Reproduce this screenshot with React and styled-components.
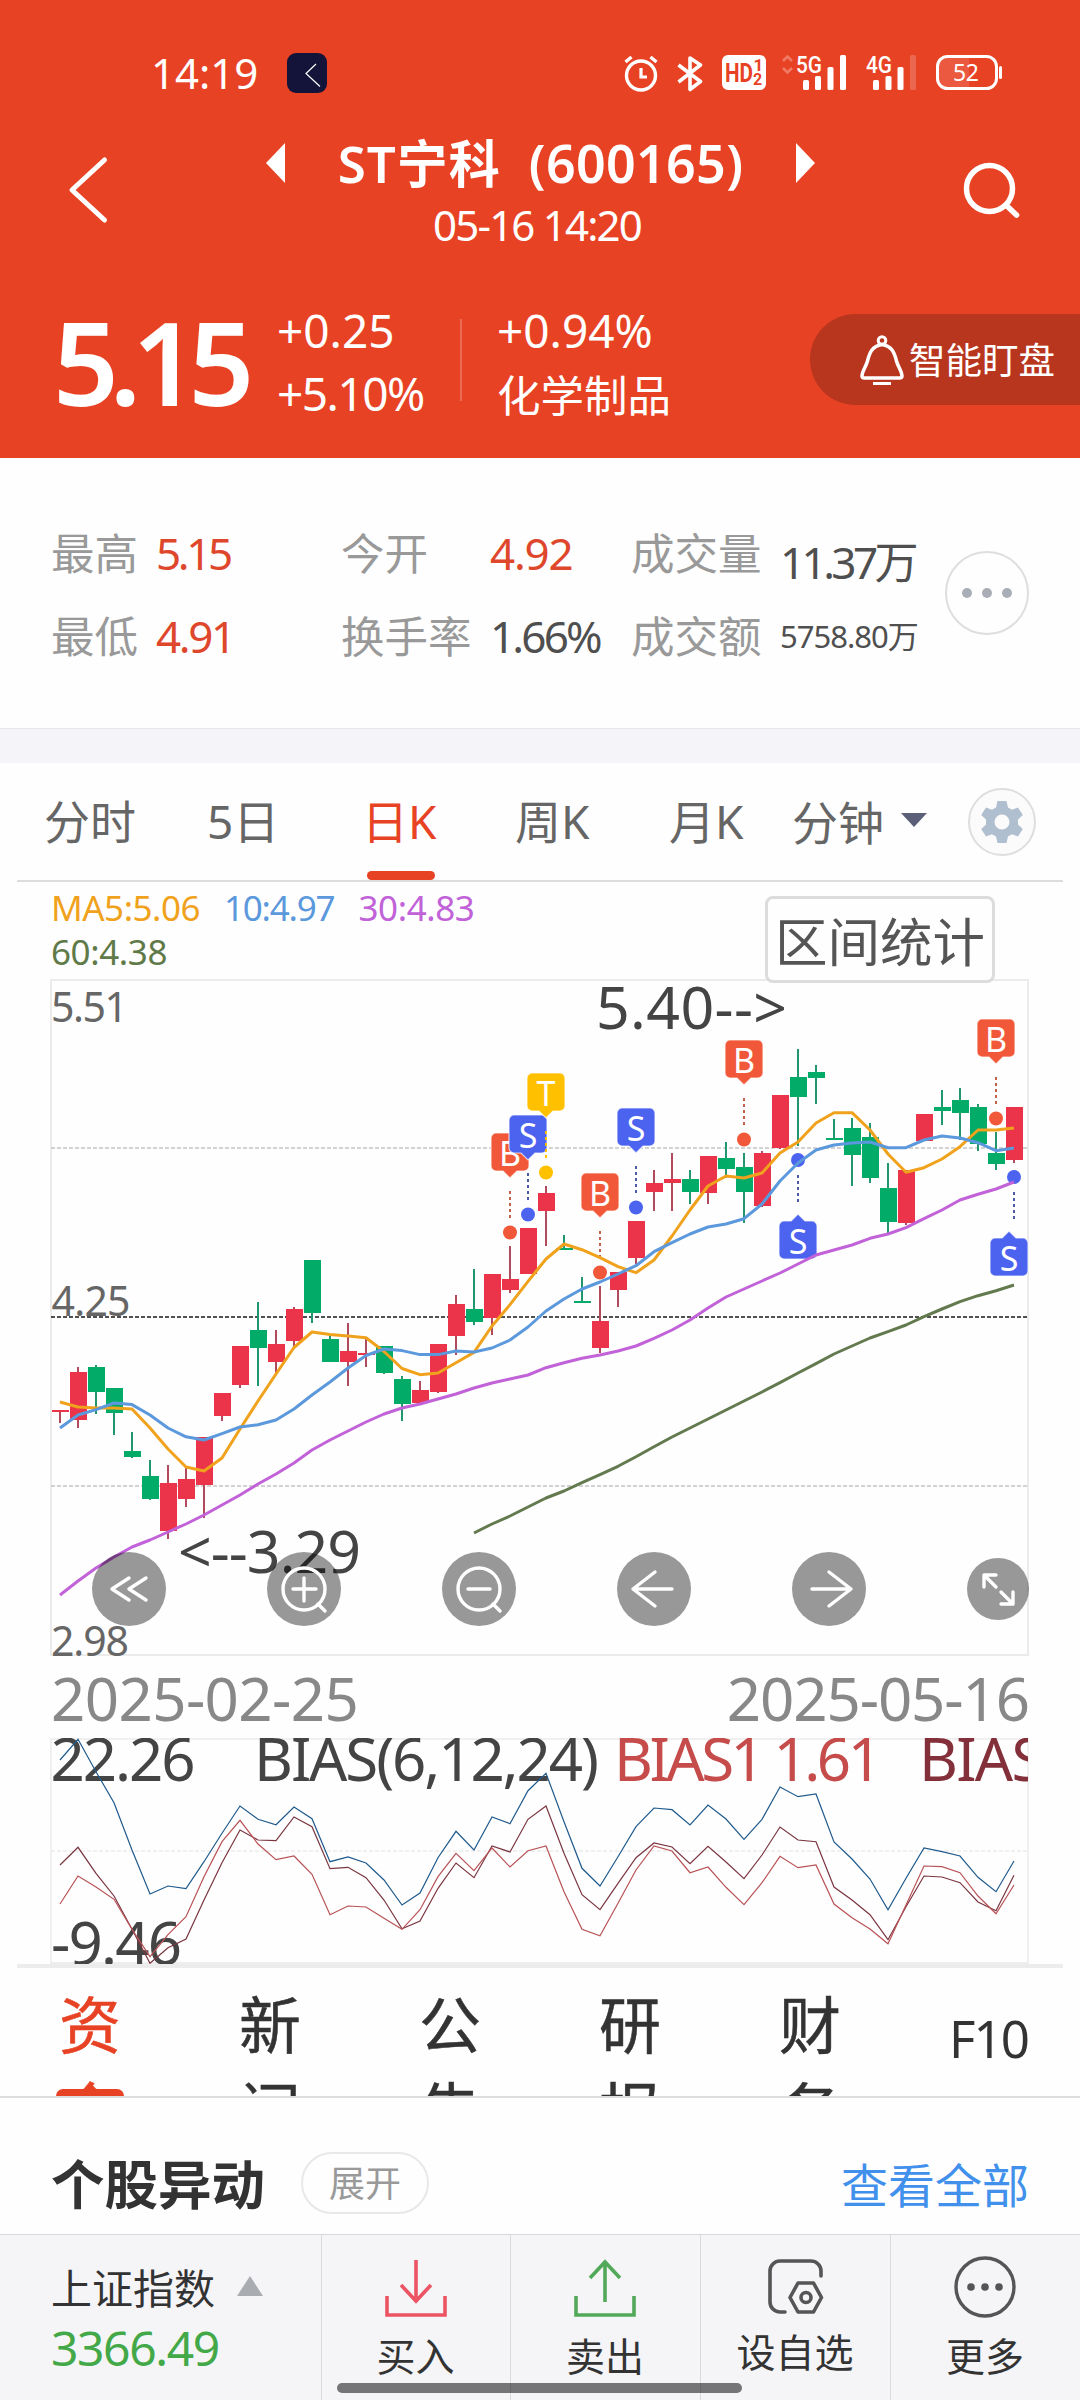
import React from "react";
import styled, { createGlobalStyle } from "styled-components";

const FONT = '"Noto Sans", "Noto Sans CJK SC", sans-serif';

const GlobalStyle = createGlobalStyle`
  * { box-sizing: border-box; }
  body { margin: 0; background: #fff; font-family: ${FONT}; color: #333; }
  svg { display: block; flex: none; }
`;

const Screen = styled.main`
  position: relative;
  width: 1080px;
  height: 2400px;
  overflow: hidden;
  display: flex;
  flex-direction: column;
  background: #fefefe;
`;

const Label = styled.span`
  display: block;
  white-space: pre;
  font-size: ${(p) => p.$size}px;
  line-height: ${(p) => p.$line || Math.round(p.$size * 1.2)}px;
  color: ${(p) => p.$color || "inherit"};
  font-weight: ${(p) => p.$weight || 400};
  letter-spacing: ${(p) => p.$track || 0}px;
`;

/* ---------- header ---------- */

const Header = styled.header`
  height: 458px;
  flex: none;
  background: #e84224;
  color: #fff;
`;

const StatusBar = styled.div`
  height: 110px;
  padding: 36px 77px 0 151px;
  display: flex;
  align-items: center;
`;

const AppBadge = styled.div`
  width: 40px;
  height: 40px;
  margin-left: 29px;
  border-radius: 9px;
  background: #14143a;
`;

const StatusIcons = styled.div`
  margin-left: auto;
  height: 37px;
`;

const NavBar = styled.div`
  height: 160px;
  display: grid;
  grid-template-columns: 260px 560px 260px;
`;

const BackButton = styled.div`
  padding: 46px 0 0 66px;
`;

const SearchButton = styled.div`
  padding: 49px 0 0 142px;
`;

const TitleBlock = styled.div`
  padding-top: 24px;
  display: flex;
  flex-direction: column;
  align-items: center;
`;

const TitleRow = styled.div`
  width: 100%;
  height: 57px;
  padding: 0 5px 0 6px;
  display: flex;
  align-items: center;
  justify-content: space-between;
`;

const StockTitle = styled.div`
  display: flex;
  align-items: center;
  gap: ${(p) => p.$gap || 0}px;
`;

const Timestamp = styled(Label)`
  padding-right: 6px;
`;

const QuoteRow = styled.div`
  height: 188px;
  padding-left: 51px;
  display: flex;
  align-items: flex-start;
`;

const Price = styled.div`
  width: 226px;
  height: 188px;
  padding: 22px 0 0 2px;
`;

const ChangeColumn = styled.div`
  width: ${(p) => p.$width}px;
  padding-top: 29px;
  display: flex;
  flex-direction: column;
`;

const HeaderRule = styled.div`
  width: 2px;
  height: 82px;
  margin: 49px 35px 0 0;
  background: rgba(255, 255, 255, 0.22);
`;

const WatchPill = styled.div`
  margin: 44px 0 0 auto;
  width: 270px;
  height: 91px;
  padding-left: 50px;
  border-radius: 46px 0 0 46px;
  background: #b8351e;
  display: flex;
  align-items: center;
  gap: 5px;
`;

/* ---------- stats ---------- */

const Stats = styled.section`
  height: 270px;
  flex: none;
  padding: 54px 0 0 51px;
  display: flex;
`;

const StatGrid = styled.div`
  width: 894px;
  display: grid;
  grid-template-columns: 105px 185px 149px 141px 149px 165px;
  grid-auto-rows: 83px;
`;

const StatValue = styled(Label)`
  padding-top: ${(p) => p.$drop || 0}px;
`;

const MoreButton = styled.div`
  width: 84px;
  height: 84px;
  margin-top: 39px;
  border: 2px solid #dedede;
  border-radius: 50%;
  display: flex;
  align-items: center;
  justify-content: center;
  gap: 10px;
`;

const Dot = styled.i`
  width: 10px;
  height: 10px;
  border-radius: 50%;
  background: #a9adb5;
`;

const Band = styled.div`
  height: 35px;
  flex: none;
  border-top: 1px solid #e8e8ec;
  background: #f4f4f9;
`;

/* ---------- period tabs ---------- */

const PeriodTabs = styled.nav`
  height: 119px;
  flex: none;
  margin: 0 17px;
  padding-left: 27px;
  border-bottom: 2px solid #dcdcdc;
  display: flex;
`;

const PeriodTab = styled.div`
  width: ${(p) => p.$width}px;
  padding-top: 9px;
  display: flex;
  flex-direction: column;
  align-items: flex-start;
`;

const TabBar = styled.i`
  width: 68px;
  height: 10px;
  margin-left: 5px;
  border-radius: 5px;
  background: #e84224;
`;

const MinuteTab = styled.div`
  width: 176px;
  height: 118px;
  display: flex;
  align-items: center;
  gap: 17px;
`;

const Caret = styled.i`
  width: 0;
  height: 0;
  margin-top: -5px;
  border-left: 13.5px solid transparent;
  border-right: 13.5px solid transparent;
  ${(p) => (p.$up ? "border-bottom: 20px solid #a9adb2;" : "border-top: 14px solid #5b5f78;")}
`;

const GearButton = styled.div`
  width: 68px;
  height: 68px;
  margin-top: 25px;
  border: 2px solid #dedede;
  border-radius: 50%;
  background: #fbfbfb;
`;

/* ---------- chart ---------- */

const LegendRow = styled.div`
  height: 97px;
  flex: none;
  padding: 4px 85px 0 51px;
  display: flex;
  justify-content: space-between;
  align-items: flex-start;
`;

const Legend = styled.div`
  width: 440px;
  display: flex;
  flex-wrap: wrap;
  column-gap: 24px;
`;

const RangeButton = styled.div`
  position: relative;
  z-index: 2;
  width: 230px;
  height: 87px;
  margin-top: 10px;
  padding-top: 3px;
  border: 3px solid #dcdcdc;
  border-radius: 8px;
  background: #fefefe;
  display: flex;
  align-items: center;
  justify-content: center;
`;

const ChartArea = styled.section`
  position: relative;
  height: 677px;
  flex: none;
  margin-left: 50px;
`;

const Controls = styled.div`
  position: absolute;
  left: 42px;
  top: 573px;
  height: 74px;
  display: flex;
  align-items: center;
  gap: 101px;
`;

const ControlButton = styled.div`
  width: ${(p) => p.$size}px;
  height: ${(p) => p.$size}px;
  border-radius: 50%;
  background: rgba(0, 0, 0, 0.4);
`;

const DateRow = styled.div`
  height: 82px;
  flex: none;
  padding: 7px 51px 0 51px;
  display: flex;
  justify-content: space-between;
`;

const BiasArea = styled.section`
  height: 226px;
  flex: none;
  margin-left: 50px;
`;

/* ---------- info tabs ---------- */

const InfoTabs = styled.nav`
  position: relative;
  height: 134px;
  flex: none;
  overflow: hidden;
  border-bottom: 2px solid #dcdcdc;
`;

const InfoRule = styled.div`
  height: 4px;
  margin: 0 17px;
  background: #ececec;
`;

const InfoRow = styled.div`
  padding: 14px 0 0 59px;
  display: flex;
`;

const InfoTab = styled.div`
  width: 62px;
  margin-right: 118px;
  font-size: 62px;
  line-height: 86px;
  word-break: break-all;
  -webkit-text-stroke: 0.5px currentColor;
  color: ${(p) => (p.$active ? "#e84224" : "#333")};
`;

const ProfileTab = styled(Label)`
  margin-left: -10px;
`;

const InfoBar = styled.i`
  position: absolute;
  left: 56px;
  top: 125px;
  width: 68px;
  height: 14px;
  border-radius: 7px;
  background: #e84224;
`;

const AlertRow = styled.section`
  height: 136px;
  flex: none;
  padding: 34px 51px 0 51px;
  display: flex;
  align-items: center;
`;

const AlertText = styled(Label)`
  padding-top: 3px;
`;

const ExpandPill = styled.div`
  width: 128px;
  height: 62px;
  margin: 0 auto 0 36px;
  border: 2px solid #e8e8e8;
  border-radius: 31px;
  display: flex;
  align-items: center;
  justify-content: center;
`;

/* ---------- footer ---------- */

const Footer = styled.footer`
  height: 166px;
  flex: none;
  border-top: 1px solid #d8d8da;
  background: #f5f5f8;
  display: grid;
  grid-template-columns: 322px 189px 190px 190px 189px;
`;

const IndexCell = styled.div`
  padding: 27px 0 0 51px;
  border-right: 1px solid #dadadc;
`;

const IndexName = styled.div`
  display: flex;
  align-items: center;
  gap: 22px;
`;

const ActionCell = styled.div`
  display: flex;
  flex-direction: column;
  align-items: center;
  padding: 14px 1px 0 0;
  border-right: ${(p) => (p.$last ? "0" : "1px solid #dadadc")};
`;

const ActionLabel = styled(Label)`
  margin-top: ${(p) => p.$gap}px;
`;

const HomeBar = styled.div`
  position: absolute;
  left: 337px;
  top: 2383px;
  width: 405px;
  height: 10px;
  border-radius: 5px;
  background: rgba(0, 0, 0, 0.52);
`;

/* ---------- data ---------- */

const X0 = 60;
const STEP = 18;
const px = (i) => X0 + i * STEP;

// [up, high, bodyTop, bodyBottom, low]
const CANDLES = [
  [1, 430, 430, 432, 443], [1, 387, 392, 440, 448], [0, 385, 387, 412, 434], [0, 408, 408, 433, 455],
  [0, 452, 471, 477, 478], [0, 480, 496, 519, 520], [1, 485, 503, 551, 559], [1, 487, 499, 519, 527],
  [1, 457, 457, 505, 538], [1, 413, 413, 436, 441], [1, 366, 366, 405, 408], [0, 322, 350, 368, 406],
  [1, 350, 364, 382, 394], [1, 327, 329, 361, 368], [0, 280, 280, 333, 343], [0, 356, 359, 382, 382],
  [1, 343, 371, 382, 406], [1, 359, 373, 375, 387], [0, 366, 366, 393, 394], [0, 396, 399, 424, 441],
  [1, 401, 410, 423, 423], [1, 364, 364, 412, 413], [1, 315, 324, 356, 375], [0, 289, 329, 342, 345],
  [1, 294, 294, 338, 355], [1, 266, 299, 310, 313], [1, 248, 248, 294, 294], [1, 206, 213, 231, 266],
  [0, 255, 268, 270, 270], [0, 297, 321, 323, 323], [1, 306, 341, 368, 373], [1, 292, 292, 310, 327],
  [1, 241, 241, 278, 284], [1, 190, 203, 212, 231], [1, 173, 199, 203, 231], [0, 190, 199, 212, 224],
  [1, 176, 176, 213, 224], [0, 162, 178, 189, 198], [0, 173, 187, 212, 243], [1, 171, 173, 226, 227],
  [1, 115, 115, 168, 169], [0, 69, 97, 117, 166], [0, 85, 92, 98, 124], [0, 139, 158, 160, 160],
  [0, 138, 148, 175, 206], [0, 143, 157, 198, 203], [0, 183, 208, 242, 253], [1, 190, 190, 243, 245],
  [1, 134, 134, 161, 161], [0, 110, 127, 131, 145], [0, 108, 120, 133, 160], [0, 124, 127, 164, 171],
  [0, 152, 173, 184, 190], [1, 127, 127, 180, 183],
];

const MA5 = [422, 427, 428, 428, 429, 448, 469, 487, 491, 478, 449, 421, 394, 367.5, 352, 354.6, 356, 357.7, 371.5, 388.5, 394.7, 393, 382.7, 372.4, 346, 324.6, 301.4, 279, 264, 269.7, 277.7, 286.7, 292.7, 280, 256, 230, 206, 196, 198, 193, 173, 162, 143, 132.7, 132.7, 150, 174, 192.3, 187.7, 179, 166.7, 150, 150, 148];
const MA10 = [448, 435, 429.6, 423, 424.6, 435, 448, 456.8, 460, 453.7, 447, 444.7, 440, 429, 415, 402, 388, 375.5, 369, 370.6, 374.6, 374.6, 371, 372, 368, 360, 347, 331, 319, 309, 302, 294, 285.7, 271.7, 262.7, 254, 247, 244, 238.7, 224, 201, 183, 170, 165, 163, 162, 167.7, 167.7, 160, 156, 158, 162.7, 170.7, 168];
const MA30 = [615, 601, 588, 577, 567, 560, 552, 544, 535, 525, 515, 504, 494, 483, 470, 460, 451, 442, 434, 428, 424, 419, 414, 408, 403, 399, 395, 387.7, 382.7, 378.3, 375, 371, 366, 358.3, 350, 340, 328, 317, 309, 301, 293, 284, 275, 270, 265, 258.3, 254, 247.7, 238.7, 230, 220, 214.3, 209, 202];
const MA60 = [553, 544, 536, 527, 518, 511, 502.7, 494.7, 486.3, 476.7, 466.7, 457, 448, 439, 430, 421, 412, 402.7, 393, 383.7, 374, 366, 358, 351.7, 345, 336.7, 329, 321.7, 315.7, 310.7, 305];

const line = (ys, from = 0, f = (v) => v) => ys.map((v, i) => `${px(i + from)},${f(v)}`).join(" ");

const RED = "#f1583a";
const BLUE = "#4c63f0";
const YELLOW = "#ffc000";

const MARKS = [
  { i: 25, t: "B", c: RED, y: 153 },
  { i: 26, t: "S", c: BLUE, y: 135 },
  { i: 27, t: "T", c: YELLOW, y: 93 },
  { i: 30, t: "B", c: RED, y: 193 },
  { i: 32, t: "S", c: BLUE, y: 128 },
  { i: 38, t: "B", c: RED, y: 60 },
  { i: 52, t: "B", c: RED, y: 39 },
  { i: 41, t: "S", c: BLUE, y: 241, below: true },
  { i: 53, t: "S", c: BLUE, y: 258, below: true, shift: -5 },
];

// BIAS series are stored at triple resolution with a 98px offset.
const biasY = (v) => (v / 3 - 98).toFixed(1);
const BIAS3 = [360, 298, 395, 488, 630, 762, 738, 746, 665, 580, 498, 538, 554, 501, 536, 665, 651, 669, 720, 795, 759, 653, 574, 630, 531, 551, 452, 400, 545, 685, 738, 650, 560, 504, 509, 555, 495, 537, 598, 538, 441, 470, 462, 606, 657, 717, 809, 715, 624, 635, 648, 712, 755, 663];
const BIAS2 = [675, 622, 700, 768, 868, 970, 923, 897, 780, 668, 570, 600, 602, 531, 560, 686, 682, 713, 780, 866, 843, 745, 669, 713, 618, 636, 538, 498, 640, 764, 809, 730, 653, 609, 621, 671, 619, 666, 716, 645, 561, 600, 605, 741, 780, 824, 899, 800, 708, 711, 728, 786, 812, 706];
const BIAS1 = [792, 708, 741, 778, 868, 950, 884, 830, 710, 605, 541, 612, 659, 648, 703, 824, 798, 801, 835, 868, 809, 710, 640, 692, 624, 681, 632, 618, 755, 868, 887, 790, 690, 618, 633, 698, 681, 742, 794, 728, 649, 683, 675, 792, 833, 867, 911, 795, 678, 680, 698, 768, 821, 735];

/* ---------- drawings ---------- */

function StatusGlyphs() {
  return (
    <svg width="382" height="37" viewBox="621 55 382 37" fill="none" stroke="#fff">
      <circle cx="641" cy="75.5" r="14.5" strokeWidth="3.4" />
      <path d="M641 68v9h6" strokeWidth="3.2" />
      <path d="M625.5 62l6-5M656.5 62l-6-5" strokeWidth="3.4" />
      <path d="M678.5 65l22 16.500-10.500 8V58l10.500 7-22 17" strokeWidth="3.6" strokeLinejoin="round" />
      <rect x="722" y="55" width="44" height="35" rx="6" fill="#fff" stroke="none" />
      <g stroke="none" fontFamily={'"Roboto", sans-serif'}>
        <text x="725" y="82" fontSize="25" fontWeight="700" fill="#e84224" textLength="28" lengthAdjust="spacingAndGlyphs">HD</text>
        <text x="753.5" y="71" fontSize="17" fontWeight="700" fill="#e84224">1</text>
        <text x="753" y="84.5" fontSize="16" fontWeight="700" fill="#e84224">2</text>
        <text x="796" y="72.5" fontSize="23" fontWeight="500" fill="#fff" textLength="26" lengthAdjust="spacingAndGlyphs">5G</text>
        <text x="866" y="72.5" fontSize="23" fontWeight="500" fill="#fff" textLength="26" lengthAdjust="spacingAndGlyphs">4G</text>
      </g>
      <path d="M783 61l4.500-4.500 4.500 4.500M783 68l4.500 4.500 4.500-4.500" strokeWidth="2.5" opacity=".3" />
      <g fill="#fff" stroke="none">
        <rect x="803" y="80" width="6" height="10" rx="1.5" />
        <rect x="815" y="76" width="6" height="14" rx="1.5" />
        <rect x="827.5" y="67" width="6" height="23" rx="1.5" />
        <rect x="840" y="55" width="6" height="35" rx="1.5" />
        <rect x="873" y="80" width="6" height="10" rx="1.5" />
        <rect x="885.5" y="76" width="6" height="14" rx="1.5" />
        <rect x="897.5" y="67" width="6" height="23" rx="1.5" />
        <rect x="910" y="55" width="6" height="35" rx="1.5" opacity=".2" />
        <path d="M948 57h21v31h-21a10 10 0 0 1-10-10V67a10 10 0 0 1 10-10z" opacity=".13" />
        <rect x="999" y="66" width="3" height="13" rx="1.5" />
        <text x="953" y="81" fontSize="23" textLength="26" fontFamily={FONT}>52</text>
      </g>
      <rect x="937.5" y="56.5" width="59" height="32" rx="10" strokeWidth="3" />
    </svg>
  );
}

function Marker({ i, t, c, y, below, shift = 0 }) {
  const x = px(i);
  const bx = x + shift;
  return (
    <g>
      <line x1={x} x2={x} y1={below ? y - 46 : y + 58} y2={below ? y - 19 : y + 86} stroke={c === BLUE ? "#4a5aa8" : c === RED ? "#c2604a" : c} strokeWidth="2" strokeDasharray="3 3" />
      <circle cx={x} cy={below ? y - 61 : y + 99.5} r="7" fill={c} />
      <g stroke="#fff" strokeWidth="1.2" strokeOpacity=".7" fill={c}>
        <path
          d={
            below
              ? `M${bx - 7} ${y}l7-7 7 7h7a5 5 0 0 1 5 5v28a5 5 0 0 1-5 5h-28a5 5 0 0 1-5-5v-28a5 5 0 0 1 5-5z`
              : `M${bx - 14} ${y}h28a5 5 0 0 1 5 5v28a5 5 0 0 1-5 5h-7l-7 7-7-7h-7a5 5 0 0 1-5-5v-28a5 5 0 0 1 5-5z`
          }
        />
      </g>
      <text x={bx} y={y + 32.5} fontSize="34" fill="#fff" textAnchor="middle">{t}</text>
    </g>
  );
}

function KLineChart() {
  return (
    <svg width="980" height="677" viewBox="50 -1 980 677" fontFamily={FONT}>
      <rect x="51" y="0" width="977" height="675" fill="none" stroke="#ebebeb" strokeWidth="2" />
      <line x1="51" x2="1028" y1="168" y2="168" stroke="#c4c4c4" strokeWidth="1.5" strokeDasharray="4 2" />
      <line x1="51" x2="1028" y1="337" y2="337" stroke="#505050" strokeWidth="2" strokeDasharray="4 2" />
      <line x1="51" x2="1028" y1="506" y2="506" stroke="#c4c4c4" strokeWidth="1.5" strokeDasharray="4 2" />
      <g fill="#666" fontSize="41">
        <text x="51" y="42" textLength="77">5.51</text>
        <text x="51.5" y="336" textLength="79">4.25</text>
        <text x="51" y="675.5" textLength="78">2.98</text>
      </g>
      <g fill="#444" fontSize="59">
        <text x="596" y="48.5" textLength="191">5.40--&gt;</text>
        <text x="178" y="592.5" textLength="183">&lt;--3.29</text>
      </g>
      {CANDLES.map(([up, h, a, b, l], i) => (
        <g key={i}>
          <line x1={px(i)} x2={px(i)} y1={h} y2={l} stroke={up ? "#b04a5c" : "#22966e"} strokeWidth="2" />
          <rect x={px(i) - 8} y={a} width="17" height={b - a} fill={up ? "#eb3349" : "#03ab68"} />
        </g>
      ))}
      {MARKS.map((m) => (
        <Marker key={m.i} {...m} />
      ))}
      <g fill="none" strokeWidth="3" strokeLinejoin="round">
        <polyline points={line(MA5)} stroke="#f0a21c" />
        <polyline points={line(MA10)} stroke="#5b98dc" />
        <polyline points={line(MA30)} stroke="#c162d8" />
        <polyline points={line(MA60, 23)} stroke="#63794e" />
      </g>
    </svg>
  );
}

function BiasChart() {
  return (
    <svg width="980" height="226" viewBox="50 0 980 226" fontFamily={FONT}>
      <path d="M51 226V1H1028V226" fill="none" stroke="#ebebeb" strokeWidth="1.5" />
      <line x1="51" x2="1028" y1="225" y2="225" stroke="#e8e8e8" strokeWidth="1.5" />
      <line x1="51" x2="1028" y1="113" y2="113" stroke="#ebebeb" strokeWidth="1.5" strokeDasharray="4 2" />
      <g fontSize="60" fill="#444">
        <text x="50.5" y="43" textLength="145">22.26</text>
        <text x="254" y="43" textLength="345">BIAS(6,12,24)</text>
        <text x="614" y="43" textLength="268" fill="#c64c4c">BIAS1 1.61</text>
        <svg x="900" y="0" width="128" height="60">
          <text x="19" y="43" textLength="158" fill="#83303a">BIAS2</text>
        </svg>
        <text x="51" y="227" textLength="131">-9.46</text>
      </g>
      <g fill="none" strokeWidth="1.2">
        <polyline points={line(BIAS3, 0, biasY)} stroke="#1f5a8c" />
        <polyline points={line(BIAS2, 0, biasY)} stroke="#7a3540" />
        <polyline points={line(BIAS1, 0, biasY)} stroke="#b85256" />
      </g>
    </svg>
  );
}

const CONTROLS = [
  [74, <path key="p" d="M37 26L20 37l17 11M54 26L37 37l17 11" />],
  [74, <g key="p"><circle cx="37" cy="37" r="21" /><path d="M51 52l7 7M26 37h23M37 26v23" /></g>],
  [74, <g key="p"><circle cx="37" cy="37" r="21" /><path d="M51 52l7 7M26 37h22" /></g>],
  [74, <path key="p" d="M38 20L16 37l22 17M16 37h39" />],
  [74, <path key="p" d="M37 20l22 17-22 17M59 37H20" />],
  [62, <path key="p" d="M29 17H17v12M17 17l12 12M34 46h12V34M46 46L34 34" />],
];

function SmallGear() {
  return (
    <svg width="64" height="64" viewBox="-32 -32 64 64" fill="#b0bfcf">
      <path
        fillRule="evenodd"
        d="M-4.5 -21h9l1.500 6.500 4 2.300 6-2.300 4.800 7.500-4.800 4.500v5l4.800 4.500-4.800 7.500-6-2.300-4 2.300-1.500 6.500h-9l-1.500-6.500-4-2.300-6 2.300-4.800-7.500 4.800-4.500v-5l-4.800-4.500 4.800-7.500 6 2.300 4-2.300zM0-7.500a7.500 7.500 0 1 0 0 15 7.500 7.500 0 1 0 0-15z"
      />
    </svg>
  );
}

const STATS = [
  { name: "最高", value: "5.15", hot: true, track: -3.4 },
  { name: "今开", value: "4.92", hot: true, track: -1.2 },
  { name: "成交量", value: "11.37万", track: -3.6, drop: 9 },
  { name: "最低", value: "4.91", hot: true, track: -2.4 },
  { name: "换手率", value: "1.66%", track: -2.8 },
  { name: "成交额", value: "5758.80万", size: 31, track: -1 },
];

const PERIODS = [["分时", 163], ["5日", 155], ["日K", 153, true], ["周K", 154], ["月K", 123]];
const INFO = ["资金", "新闻", "公告", "研报", "财务"];

export default function App() {
  return (
    <Screen>
      <GlobalStyle />
      <Header>
        <StatusBar>
          <Label $size={42} $track={0}>14:19</Label>
          <AppBadge>
            <svg width="40" height="40" fill="none" stroke="#fff" strokeWidth="1.2">
              <path d="M29 11L19 20.500l14 13" />
            </svg>
          </AppBadge>
          <StatusIcons><StatusGlyphs /></StatusIcons>
        </StatusBar>
        <NavBar>
          <BackButton>
            <svg width="44" height="68" fill="none" stroke="#fff" strokeWidth="5" strokeLinecap="round" strokeLinejoin="round">
              <path d="M38.500 4L6 34l32.500 30" />
            </svg>
          </BackButton>
          <TitleBlock>
            <TitleRow>
              <svg width="19" height="40" fill="#fff"><path d="M19 0v40L0 20z" /></svg>
              <StockTitle $gap={28}>
                <Label $size={51} $weight={600} $line={58} $track={1}>ST宁科</Label>
                <Label $size={52} $weight={600} $line={56} $track={0.3}>(600165)</Label>
              </StockTitle>
              <svg width="19" height="40" fill="#fff"><path d="M0 0v40l19-20z" /></svg>
            </TitleRow>
            <Timestamp $size={42} $line={68} $track={-1.8}>05-16 14:20</Timestamp>
          </TitleBlock>
          <SearchButton>
            <svg width="60" height="60" fill="none" stroke="#fff" strokeWidth="5.5" strokeLinecap="round">
              <circle cx="27.5" cy="29.5" r="23" />
              <path d="M45 47l9.500 9" />
            </svg>
          </SearchButton>
        </NavBar>
        <QuoteRow>
          <Price><Label $size={115} $weight={600} $line={140} $track={-9.3}>5.15</Label></Price>
          <ChangeColumn $width={183}>
            <Label $size={46} $line={62}>+0.25</Label>
            <Label $size={46} $line={64} $track={-1.5}>+5.10%</Label>
          </ChangeColumn>
          <HeaderRule />
          <ChangeColumn $width={220}>
            <Label $size={46} $line={62}>+0.94%</Label>
            <Label $size={43.5} $line={68}>化学制品</Label>
          </ChangeColumn>
          <WatchPill>
            <svg width="44" height="52" fill="none" stroke="#fff" strokeWidth="3.5" strokeLinejoin="round">
              <circle cx="22" cy="6.5" r="3.8" strokeWidth="3" />
              <path d="M22 10.500C12 12 9.500 19 7.500 27 6 33 2 37 2 42q0 2 2.500 2h35q2.500 0 2.500-2c0-5-4-9-5.500-15C34.500 19 32 12 22 10.500z" />
              <path d="M13 49.500h18" strokeWidth="3" />
            </svg>
            <Label $size={36.5} $line={46}>智能盯盘</Label>
          </WatchPill>
        </QuoteRow>
      </Header>

      <Stats>
        <StatGrid>
          {STATS.map((s) => (
            <React.Fragment key={s.name}>
              <Label $size={43.5} $line={83} $color="#999">{s.name}</Label>
              <StatValue $size={s.size || 44} $line={83} $drop={s.drop} $track={s.track} $color={s.hot ? "#de472b" : "#4f4f4f"}>{s.value}</StatValue>
            </React.Fragment>
          ))}
        </StatGrid>
        <MoreButton><Dot /><Dot /><Dot /></MoreButton>
      </Stats>
      <Band />

      <PeriodTabs>
        {PERIODS.map(([name, width, active]) => (
          <PeriodTab key={name} $width={width}>
            <Label $size={46} $line={99} $color={active ? "#e84224" : "#666"}>{name}</Label>
            {active && <TabBar />}
          </PeriodTab>
        ))}
        <MinuteTab>
          <Label $size={46} $line={118} $color="#666">分钟</Label>
          <Caret />
        </MinuteTab>
        <GearButton><SmallGear /></GearButton>
      </PeriodTabs>

      <LegendRow>
        <Legend>
          <Label $size={35} $line={44} $track={-0.5} $color="#f0a21c">MA5:5.06</Label>
          <Label $size={35} $line={44} $track={-1.2} $color="#5b98dc">10:4.97</Label>
          <Label $size={35} $line={44} $track={-0.4} $color="#c162d8">30:4.83</Label>
          <Label $size={35} $line={44} $track={-0.4} $color="#5f7a48">60:4.38</Label>
        </Legend>
        <RangeButton><Label $size={52.5} $color="#555">区间统计</Label></RangeButton>
      </LegendRow>
      <ChartArea>
        <KLineChart />
        <Controls>
          {CONTROLS.map(([size, art], i) => (
            <ControlButton key={i} $size={size}>
              <svg width={size} height={size} fill="none" stroke="#fff" strokeWidth="3.4" strokeLinecap="round" strokeLinejoin="round">{art}</svg>
            </ControlButton>
          ))}
        </Controls>
      </ChartArea>
      <DateRow>
        <Label $size={60} $line={70} $track={-0.6} $color="#888">2025-02-25</Label>
        <Label $size={60} $line={70} $track={-1.1} $color="#888">2025-05-16</Label>
      </DateRow>
      <BiasArea><BiasChart /></BiasArea>

      <InfoTabs>
        <InfoRule />
        <InfoRow>
          {INFO.map((name, i) => (
            <InfoTab key={name} $active={i === 0}>{name}</InfoTab>
          ))}
          <ProfileTab $size={51} $line={112} $track={-2}>F10</ProfileTab>
        </InfoRow>
        <InfoBar />
      </InfoTabs>

      <AlertRow>
        <AlertText $size={53.5} $weight={700}>个股异动</AlertText>
        <ExpandPill><Label $size={36} $color="#999">展开</Label></ExpandPill>
        <AlertText $size={47} $color="#4090ec">查看全部</AlertText>
      </AlertRow>

      <Footer>
        <IndexCell>
          <IndexName>
            <Label $size={41} $line={52}>上证指数</Label>
            <Caret $up />
          </IndexName>
          <Label $size={48} $line={67} $track={-1.4} $color="#43a847">3366.49</Label>
        </IndexCell>
        <ActionCell>
          <svg width="70" height="70" viewBox="-35 -11 70 70" fill="none" stroke="#ec5463" strokeWidth="3.6">
            <path d="M0 0v40M-15 25L0 41 15 25M-29 36v19h58V36" />
          </svg>
          <ActionLabel $size={39} $gap={13}>买入</ActionLabel>
        </ActionCell>
        <ActionCell>
          <svg width="70" height="70" viewBox="-35 -11 70 70" fill="none" stroke="#53a95a" strokeWidth="3.6">
            <path d="M0 42V2M-15 18L0 2l15 16M-29 36v19h58V36" />
          </svg>
          <ActionLabel $size={39} $gap={13}>卖出</ActionLabel>
        </ActionCell>
        <ActionCell>
          <svg width="62" height="70" viewBox="764 2249 62 70" fill="none" stroke="#555" strokeWidth="3.6" strokeLinecap="round" strokeLinejoin="round">
            <path d="M785 2312h-5a10 10 0 0 1-10-10V2271a10 10 0 0 1 10-10h31a10 10 0 0 1 10 10V2276" />
            <path d="M798 2283h15.500l8 14.500-8 14.500H798l-8-14.500z" />
            <circle cx="806" cy="2297.5" r="5" />
          </svg>
          <ActionLabel $size={39} $gap={9}>设自选</ActionLabel>
        </ActionCell>
        <ActionCell $last>
          <svg width="70" height="70" viewBox="-35 -38 70 70" fill="none" stroke="#555" strokeWidth="3.4">
            <circle cx="0" cy="0" r="29" />
            <g fill="#555" stroke="none"><circle cx="-14" r="3.8" /><circle r="3.8" /><circle cx="14" r="3.8" /></g>
          </svg>
          <ActionLabel $size={39} $gap={13}>更多</ActionLabel>
        </ActionCell>
      </Footer>
      <HomeBar />
    </Screen>
  );
}
